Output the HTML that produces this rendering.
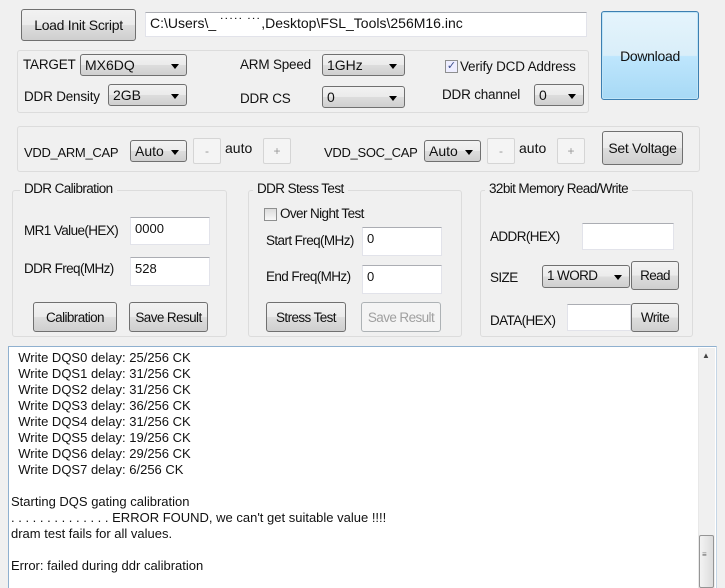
<!DOCTYPE html>
<html><head><meta charset="utf-8"><style>
*{box-sizing:border-box;margin:0;padding:0}
html,body{width:725px;height:588px;overflow:hidden}
body{background:#f0f0f0;position:relative;font-family:"Liberation Sans",sans-serif;font-size:14px;color:#111}
.a{position:absolute;white-space:nowrap}
.btn{position:absolute;border:1px solid #707070;border-radius:3px;background:linear-gradient(#f2f2f2 0%,#ebebeb 50%,#dddddd 51%,#cfcfcf 100%);display:flex;align-items:center;justify-content:center;font-size:14px;letter-spacing:-0.3px}
.dis{border-color:#adb2b5;color:#a0a0a0;background:#f4f4f4}
.tb{position:absolute;background:#fff;border:1px solid #e2e3ea;border-top-color:#abadb3;padding:3px 4px;font-size:13px}
.cb{position:absolute;border:1px solid #707070;border-radius:3px;background:linear-gradient(#f2f2f2 0%,#ebebeb 50%,#dddddd 51%,#cfcfcf 100%);padding:2px 4px;font-size:14px}
.cb:after{content:"";position:absolute;right:7px;top:9px;border:4px solid transparent;border-top:5px solid #000;border-bottom:0}
.grp{position:absolute;border:1px solid #dcdcdc;border-radius:3px}
.sb{position:absolute;border:1px solid #d5d5d5;border-radius:2px;background:#f4f4f4;color:#999;font-size:12px;display:flex;align-items:center;justify-content:center}
.c{font-size:13.5px;letter-spacing:-0.6px}
.n{font-size:13.5px;letter-spacing:-0.2px}
.chk{position:absolute;width:13px;height:13px;border:1px solid #8e8f8f;background:linear-gradient(#dcdcdc,#f8f8f8)}
</style></head><body>
<div class="btn" style="left:21px;top:9px;width:115px;height:32px">Load Init Script</div>
<div class="tb" style="left:145px;top:12px;width:442px;height:25px;font-size:14px;padding:2px 4px">C:\Users\_ ˙˙˙˙˙ ˙˙˙,Desktop\FSL_Tools\256M16.inc</div>
<div class="btn" style="left:601px;top:11px;width:98px;height:89px;border-color:#3c7fb1;background:linear-gradient(#e5f4fc 0%,#d9eef9 50%,#bee6fd 51%,#a7d9f5 100%);box-shadow:inset 0 0 0 1px #bfe4f7;align-items:flex-start;padding-top:36px">Download</div>

<div class="grp" style="left:17px;top:50px;width:572px;height:63px"></div>
<div class="a n" style="left:23px;top:57px">TARGET</div>
<div class="cb" style="left:80px;top:54px;width:107px;height:22px">MX6DQ</div>
<div class="a n" style="left:240px;top:57px">ARM Speed</div>
<div class="cb" style="left:322px;top:54px;width:83px;height:22px">1GHz</div>
<div class="chk" style="left:445px;top:60px;background:#eef;font-size:11px;line-height:11px;color:#3b4d8c;text-align:center">✓</div>
<div class="a n" style="left:460px;top:59px">Verify DCD Address</div>
<div class="a n" style="left:24px;top:89px">DDR Density</div>
<div class="cb" style="left:108px;top:84px;width:79px;height:22px">2GB</div>
<div class="a n" style="left:240px;top:91px">DDR CS</div>
<div class="cb" style="left:322px;top:86px;width:83px;height:22px">0</div>
<div class="a n" style="left:442px;top:87px">DDR channel</div>
<div class="cb" style="left:534px;top:84px;width:50px;height:22px">0</div>

<div class="grp" style="left:17px;top:126px;width:683px;height:46px"></div>
<div class="a" style="left:24px;top:145px;font-size:13px;letter-spacing:-0.3px">VDD_ARM_CAP</div>
<div class="cb" style="left:130px;top:140px;width:57px;height:22px">Auto</div>
<div class="sb" style="left:193px;top:138px;width:28px;height:26px">-</div>
<div class="a" style="left:225px;top:140px">auto</div>
<div class="sb" style="left:263px;top:138px;width:28px;height:26px">+</div>
<div class="a" style="left:324px;top:145px;font-size:13px;letter-spacing:-0.3px">VDD_SOC_CAP</div>
<div class="cb" style="left:424px;top:140px;width:57px;height:22px">Auto</div>
<div class="sb" style="left:487px;top:138px;width:28px;height:26px">-</div>
<div class="a" style="left:519px;top:140px">auto</div>
<div class="sb" style="left:557px;top:138px;width:28px;height:26px">+</div>
<div class="btn" style="left:602px;top:131px;width:81px;height:34px">Set Voltage</div>

<div class="grp" style="left:12px;top:190px;width:215px;height:147px"></div>
<div class="a c" style="left:20px;top:181px;background:#f0f0f0;padding:0 4px">DDR Calibration</div>
<div class="a c" style="left:24px;top:223px">MR1 Value(HEX)</div>
<div class="tb" style="left:130px;top:217px;width:80px;height:28px">0000</div>
<div class="a c" style="left:24px;top:261px">DDR Freq(MHz)</div>
<div class="tb" style="left:130px;top:257px;width:80px;height:29px">528</div>
<div class="btn c" style="left:33px;top:302px;width:84px;height:30px">Calibration</div>
<div class="btn c" style="left:129px;top:302px;width:79px;height:30px">Save Result</div>

<div class="grp" style="left:248px;top:190px;width:214px;height:147px"></div>
<div class="a c" style="left:253px;top:181px;background:#f0f0f0;padding:0 4px">DDR Stess Test</div>
<div class="chk" style="left:264px;top:208px"></div>
<div class="a c" style="left:280px;top:206px">Over Night Test</div>
<div class="a c" style="left:266px;top:233px">Start Freq(MHz)</div>
<div class="tb" style="left:362px;top:227px;width:80px;height:29px">0</div>
<div class="a c" style="left:266px;top:269px">End Freq(MHz)</div>
<div class="tb" style="left:362px;top:265px;width:80px;height:29px">0</div>
<div class="btn c" style="left:266px;top:302px;width:80px;height:30px">Stress Test</div>
<div class="btn c dis" style="left:361px;top:302px;width:80px;height:30px">Save Result</div>

<div class="grp" style="left:480px;top:190px;width:213px;height:147px"></div>
<div class="a c" style="left:485px;top:181px;background:#f0f0f0;padding:0 4px">32bit Memory Read/Write</div>
<div class="a c" style="left:490px;top:229px">ADDR(HEX)</div>
<div class="tb" style="left:582px;top:223px;width:92px;height:27px"></div>
<div class="a c" style="left:490px;top:270px">SIZE</div>
<div class="cb c" style="left:542px;top:265px;width:88px;height:23px">1 WORD</div>
<div class="btn c" style="left:631px;top:261px;width:48px;height:29px">Read</div>
<div class="a c" style="left:490px;top:313px">DATA(HEX)</div>
<div class="tb" style="left:567px;top:304px;width:64px;height:27px"></div>
<div class="btn c" style="left:631px;top:303px;width:48px;height:29px">Write</div>

<div style="position:absolute;left:8px;top:346px;width:709px;height:250px;background:#fff;border:1px solid #8fb0cf;border-right-color:#c5d6e6"></div>
<div style="position:absolute;left:698px;top:348px;width:17px;height:240px;background:#f0f0f0;border-left:1px solid #e8e8e8"></div>
<div class="a" style="left:702px;top:351px;font-size:8px;color:#444">▲</div>
<div style="position:absolute;left:699px;top:535px;width:15px;height:53px;border:1px solid #959595;border-radius:2px;background:linear-gradient(90deg,#f3f3f3,#dcdcdc)"></div>
<div class="a" style="left:702px;top:553px;font-size:8px;line-height:3px;color:#666">≡</div>
<div class="a" style="left:11px;top:350px;font-size:13px;line-height:16px;white-space:pre">  Write DQS0 delay: 25/256 CK
  Write DQS1 delay: 31/256 CK
  Write DQS2 delay: 31/256 CK
  Write DQS3 delay: 36/256 CK
  Write DQS4 delay: 31/256 CK
  Write DQS5 delay: 19/256 CK
  Write DQS6 delay: 29/256 CK
  Write DQS7 delay: 6/256 CK

Starting DQS gating calibration
. . . . . . . . . . . . . . ERROR FOUND, we can't get suitable value !!!!
dram test fails for all values.

Error: failed during ddr calibration</div>
</body></html>
